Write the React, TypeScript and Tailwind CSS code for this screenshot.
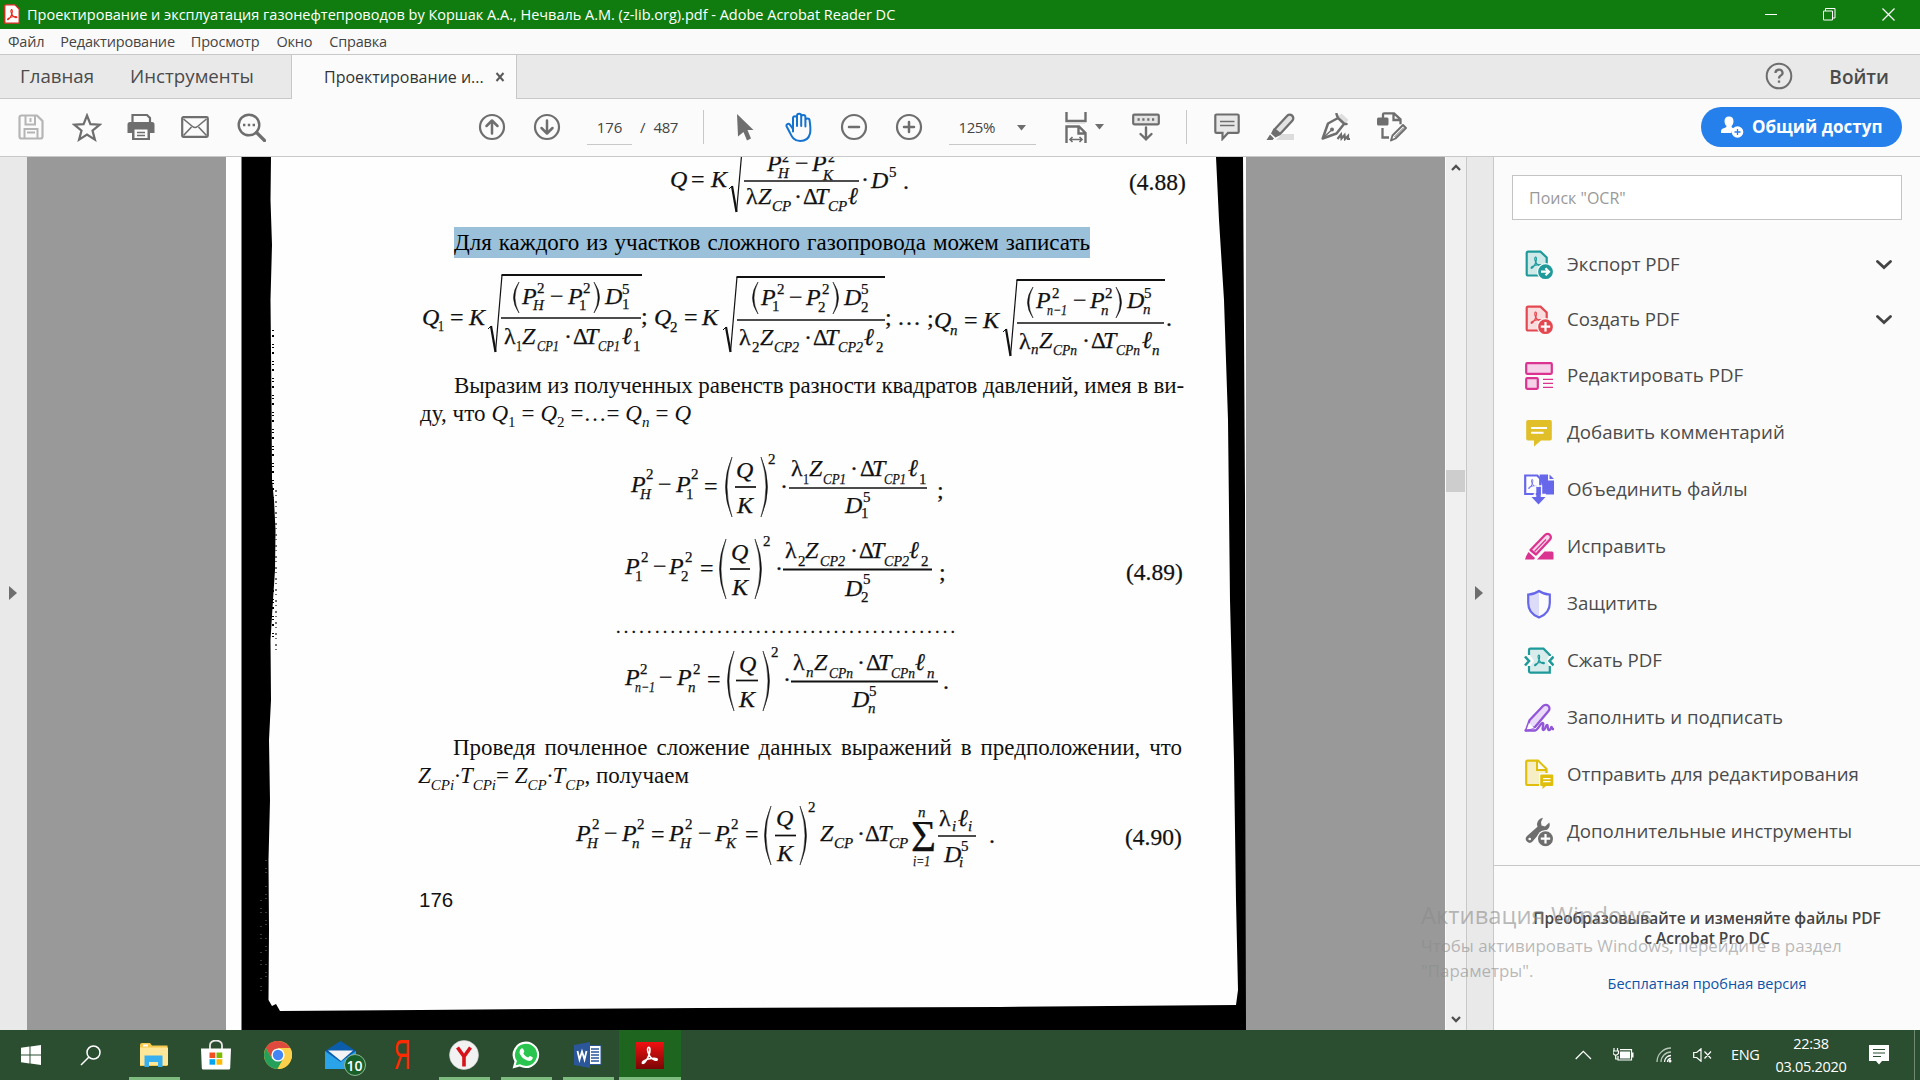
import type { ReactNode } from "react";

const ui = "font-['Open_Sans','Noto_Sans',sans-serif]";
const serif = "font-['Liberation_Serif',serif]";

/* ---------- formula drawing ---------- */

type Glyph = [x: number, y: number, text: string, size?: number, width?: number];

const upright = /^[\d().,;:=−·…λΔΣ]+$/;

function Glyphs({ items }: { items: Glyph[] }) {
  return (
    <>
      {items.map(([x, y, text, size = 24, width], i) => (
        <text
          key={i}
          x={x}
          y={y}
          fontSize={size}
          fontStyle={upright.test(text) ? "normal" : "italic"}
          textLength={width}
          lengthAdjust="spacingAndGlyphs"
        >
          {text}
        </text>
      ))}
    </>
  );
}

function Root({ x, y, top, right, bottom }: { x: number; y: number; top: number; right: number; bottom: number }) {
  return (
    <g fill="none" stroke="#111">
      <path d={`M${x} ${y + 2}l3 -3`} strokeWidth="1" />
      <path d={`M${x + 3} ${y - 1}L${x + 7.5} ${bottom}`} strokeWidth="2.2" />
      <path d={`M${x + 7.5} ${bottom}L${x + 14} ${top}`} strokeWidth="1.2" />
      <path d={`M${x + 13.5} ${top}H${right}`} strokeWidth="1.8" />
    </g>
  );
}

function Rule({ x1, x2, y, w = 1.7 }: { x1: number; x2: number; y: number; w?: number }) {
  return <path d={`M${x1} ${y}H${x2}`} stroke="#111" strokeWidth={w} />;
}

function Parens({ l, r, top, bottom, d = 6 }: { l: number; r: number; top: number; bottom: number; d?: number }) {
  const m = (top + bottom) / 2;
  return (
    <g fill="#111" stroke="#111" strokeWidth="0.5">
      <path d={`M${l + d} ${top}Q${l - d + 1} ${m} ${l + d} ${bottom}Q${l - d + 4} ${m} ${l + d} ${top}`} />
      <path d={`M${r - d} ${top}Q${r + d - 1} ${m} ${r - d} ${bottom}Q${r + d - 4} ${m} ${r - d} ${top}`} />
    </g>
  );
}

function Figure({ top, bottom, children }: { top: number; bottom: number; children: ReactNode }) {
  return (
    <svg
      width={780}
      height={bottom - top}
      viewBox={`416 ${top} 780 ${bottom - top}`}
      className="block shrink-0"
      fontFamily="'Liberation Serif', serif"
      fill="#111"
      stroke="#111"
      strokeWidth="0.25"
    >
      {children}
    </svg>
  );
}

function ScanEdges() {
  return (
    <svg width="1020" height="873" viewBox="226 157 1020 873" className="absolute inset-0">
      <path
        d="M241.500 157H271L270.500 200L272 245L270.500 300L271.500 400L272 480L274 500L275.500 530L275 570L273 600L270.500 640L271 700L269 740L270 800L268.500 860L269 930L268.500 1000L272 1006L276 1004L280 1011L420 1010L700 1008L1000 1007L1236 1005L1238 990L1236 900L1234 760L1230 600L1228 420L1224 300L1219 220L1216 157H1243L1245 500L1246 1030H241.500Z"
        fill="#000"
      />
      <path d="M273 330V640" stroke="#000" strokeWidth="2" strokeDasharray="1 4 2 7 1 2" />
      <path d="M276 490V650" stroke="#444" strokeWidth="1.5" strokeDasharray="2 3 1 5" />
      <path d="M261 900V1000M266 860V990" stroke="#777" strokeWidth="1" strokeDasharray="1 7 1 3 1 13" />
    </svg>
  );
}

function ScannedPage() {
  return (
    <div className={`relative h-[873px] w-[1020px] overflow-hidden bg-[#fefefe] ${serif} text-[#111]`}>
      <ScanEdges />
      <div className="relative ml-[190px] flex w-[780px] flex-col items-start text-[23px] leading-7 whitespace-nowrap">
        <Figure top={157} bottom={227}>
          <Glyphs
            items={[
              [670, 187, "Q"], [691, 187, "="], [711, 187, "K"],
              [767, 171, "P"], [782, 162, "2", 14], [778, 178, "H", 15], [795, 171, "−"],
              [812, 171, "P"], [828, 162, "2", 14], [823, 180, "K", 15],
              [861, 187, "·"], [871, 188, "D"], [889, 177, "5", 15], [903, 189, "."],
              [746, 204, "λ"], [758, 204, "Z"], [772, 211, "CP", 15], [794, 204, "·"],
              [803, 204, "Δ", 23], [815, 204, "T"], [828, 211, "CP", 15], [848, 204, "ℓ"],
              [1129, 190, "(4.88)", 23.5],
            ]}
          />
          <Root x={729} y={187} top={139} right={860} bottom={212} />
          <Rule x1={744} x2={859} y={181} />
        </Figure>

        <p className="ml-[38px] h-[31px] w-[636px] bg-[#9ac0da] pt-[2px] text-black [text-align-last:justify]">
          Для каждого из участков сложного газопровода можем записать
        </p>

        <Figure top={258} bottom={372}>
          <Glyphs
            items={[
              [422, 325, "Q"], [438, 331, "1", 15, 6], [450, 325, "="], [469, 325, "K"],
              [522, 304, "P"], [537, 293, "2", 15], [533, 310, "H", 15], [550, 304, "−"],
              [568, 304, "P"], [583, 293, "2", 15], [579, 310, "1", 15],
              [605, 304, "D"], [622, 294, "5", 15], [622, 309, "1", 15], [641, 324, ";"],
              [504, 344, "λ"], [516, 351, "1", 15, 6], [522, 344, "Z"], [537, 351, "CP1", 15, 22], [564, 344, "·"],
              [573, 344, "Δ", 23], [585, 344, "T"], [598, 351, "CP1", 15, 22], [622, 344, "ℓ"], [633, 351, "1", 15],

              [654, 325, "Q"], [670, 332, "2", 15], [684, 325, "="], [702, 325, "K"],
              [761, 305, "P"], [777, 294, "2", 15], [772, 311, "1", 15], [789, 305, "−"],
              [806, 305, "P"], [822, 294, "2", 15], [818, 312, "2", 15],
              [844, 305, "D"], [861, 294, "5", 15], [861, 312, "2", 15], [885, 325, ";"],
              [739, 345, "λ"], [752, 352, "2", 15], [760, 345, "Z"], [774, 352, "CP2", 15, 25], [804, 345, "·"],
              [813, 345, "Δ", 23], [825, 345, "T"], [838, 352, "CP2", 15, 25], [864, 345, "ℓ"], [876, 352, "2", 15],

              [897, 325, "…", 24], [927, 326, ";"], [934, 328, "Q"], [950, 335, "n", 15], [964, 328, "="], [983, 328, "K"],
              [1036, 308, "P"], [1052, 298, "2", 15], [1047, 315, "n−1", 15, 20], [1073, 308, "−"],
              [1090, 308, "P"], [1105, 298, "2", 15], [1101, 315, "n", 15],
              [1127, 308, "D"], [1144, 298, "5", 15], [1143, 314, "n", 15], [1166, 326, "."],
              [1019, 349, "λ"], [1031, 354, "n", 15], [1039, 348, "Z"], [1053, 355, "CPn", 15, 24], [1082, 348, "·"],
              [1091, 348, "Δ", 23], [1103, 348, "T"], [1116, 355, "CPn", 15, 24], [1142, 348, "ℓ"], [1152, 355, "n", 15],
            ]}
          />
          <Root x={488} y={327} top={275} right={642} bottom={352} />
          <Rule x1={501} x2={641} y={318} />
          <Parens l={513} r={600} top={282} bottom={313} />
          <Root x={723} y={328} top={277} right={885} bottom={352} />
          <Rule x1={737} x2={885} y={320} />
          <Parens l={752} r={839} top={282} bottom={314} />
          <Root x={1003} y={330} top={280} right={1165} bottom={356} />
          <Rule x1={1017} x2={1164} y={323} />
          <Parens l={1027} r={1122} top={287} bottom={318} />
        </Figure>

        <p className="ml-[38px] h-7 w-[730px] tracking-[-0.12px] [text-align-last:justify]">
          Выразим из полученных равенств разности квадратов давлений, имея в ви-
        </p>
        <p className="ml-1 h-7 w-[271px] [text-align-last:justify] [&_sub]:-bottom-[6px] [&_sub]:text-[15px] [&_sub]:leading-none">
          ду, что <i>Q</i>
          <sub>1</sub> = <i>Q</i>
          <sub>2</sub> =…= <i>Q</i>
          <sub>
            <i>n</i>
          </sub>{" "}
          = <i>Q</i>
        </p>

        <Figure top={428} bottom={734}>
          <Glyphs
            items={[
              [631, 492, "P"], [646, 479, "2", 15], [640, 499, "H", 15], [658, 492, "−"],
              [676, 492, "P"], [691, 479, "2", 15], [686, 499, "1", 15], [704, 494, "="],
              [736, 478, "Q"], [737, 513, "K"], [768, 464, "2", 15], [780, 494, "·"],
              [791, 476, "λ"], [803, 484, "1", 15, 6], [809, 476, "Z"], [823, 484, "CP1", 15, 23], [850, 476, "·"],
              [860, 476, "Δ", 23], [872, 476, "T"], [884, 484, "CP1", 15, 22], [908, 476, "ℓ"], [919, 484, "1", 15],
              [845, 513, "D"], [863, 502, "5", 15], [861, 518, "1", 15], [937, 498, ";"],

              [625, 574, "P"], [641, 562, "2", 15], [635, 581, "1", 15], [653, 574, "−"],
              [669, 574, "P"], [685, 562, "2", 15], [681, 581, "2", 15], [700, 576, "="],
              [731, 560, "Q"], [732, 595, "K"], [763, 546, "2", 15], [775, 576, "·"],
              [785, 558, "λ"], [798, 566, "2", 15], [805, 558, "Z"], [820, 566, "CP2", 15, 25], [850, 558, "·"],
              [859, 558, "Δ", 23], [871, 558, "T"], [884, 566, "CP2", 15, 25], [909, 558, "ℓ"], [921, 566, "2", 15],
              [845, 596, "D"], [863, 584, "5", 15], [861, 602, "2", 15], [939, 580, ";"],
              [1126, 580, "(4.89)", 23.5],

              [625, 685, "P"], [640, 674, "2", 15], [635, 692, "n−1", 15, 20], [659, 685, "−"],
              [677, 685, "P"], [693, 674, "2", 15], [688, 692, "n", 15], [707, 687, "="],
              [739, 672, "Q"], [739, 707, "K"], [771, 657, "2", 15], [783, 687, "·"],
              [793, 670, "λ"], [806, 677, "n", 15], [814, 670, "Z"], [829, 678, "CPn", 15, 24], [857, 670, "·"],
              [866, 670, "Δ", 23], [878, 670, "T"], [891, 678, "CPn", 15, 24], [915, 670, "ℓ"], [927, 678, "n", 15],
              [852, 707, "D"], [869, 696, "5", 15], [868, 713, "n", 15], [943, 689, "."],
            ]}
          />
          <text x="616" y="633" fontSize="18" textLength="339" lengthAdjust="spacing">
            {".".repeat(44)}
          </text>
          <Rule x1={735} x2={756} y={487} />
          <Rule x1={789} x2={927} y={488} />
          <Parens l={725} r={768} top={457} bottom={517} d={7} />
          <Rule x1={730} x2={750} y={569} />
          <Rule x1={783} x2={932} y={569.5} w={2.2} />
          <Parens l={719} r={762} top={539} bottom={599} d={7} />
          <Rule x1={736} x2={758} y={680.5} />
          <Rule x1={791} x2={938} y={681.5} w={2.2} />
          <Parens l={727} r={770} top={651} bottom={711} d={7} />
        </Figure>

        <p className="ml-[37px] h-7 w-[729px] [text-align-last:justify]">
          Проведя почленное сложение данных выражений в предположении, что
        </p>
        <p className="ml-[2px] h-7 w-[269px] [text-align-last:justify] [&_sub]:-bottom-[7px] [&_sub]:text-[15px] [&_sub]:leading-none">
          <i>
            Z<sub>CPi</sub>·T<sub>CPi</sub>
          </i>
          ={" "}
          <i>
            Z<sub>CP</sub>·T<sub>CP</sub>
          </i>
          , получаем
        </p>

        <Figure top={790} bottom={886}>
          <Glyphs
            items={[
              [576, 841, "P"], [592, 829, "2", 15], [587, 848, "H", 15], [604, 841, "−"],
              [622, 841, "P"], [637, 829, "2", 15], [632, 848, "n", 15], [651, 842, "="],
              [669, 841, "P"], [685, 829, "2", 15], [680, 848, "H", 15], [698, 841, "−"],
              [715, 841, "P"], [731, 829, "2", 15], [726, 848, "K", 15], [745, 842, "="],
              [776, 826, "Q"], [777, 861, "K"], [808, 812, "2", 15],
              [820, 841, "Z"], [834, 848, "CP", 15], [857, 841, "·"],
              [865, 841, "Δ", 23], [878, 841, "T"], [889, 848, "CP", 15],
              [911, 851, "Σ", 44, 25], [918, 817, "n", 15], [913, 866, "i=1", 15, 17],
              [939, 826, "λ"], [952, 831, "i", 15], [958, 826, "ℓ"], [968, 831, "i", 15],
              [944, 862, "D"], [961, 851, "5", 15], [959, 867, "i", 15], [989, 843, "."],
              [1125, 845, "(4.90)", 23.5],
            ]}
          />
          <Rule x1={775} x2={796} y={835.5} />
          <Rule x1={938} x2={976} y={836} />
          <Parens l={764} r={807} top={806} bottom={865} d={7} />
        </Figure>

        <p className="ml-[3px] font-['Liberation_Sans',sans-serif] text-[20.5px]">176</p>
      </div>
    </div>
  );
}

/* ---------- icons ---------- */

function Svg({ w, h, box, className = "", children }: { w: number; h: number; box?: string; className?: string; children: ReactNode }) {
  return (
    <svg width={w} height={h} viewBox={box ?? `0 0 ${w} ${h}`} className={`block shrink-0 ${className}`} fill="none">
      {children}
    </svg>
  );
}

const g = "#6e6e6e";

function SaveIcon() {
  return (
    <Svg w={26} h={26}>
      <path d="M1.500 3.500a2 2 0 0 1 2-2H19l5.500 5.500v15.500a2 2 0 0 1-2 2h-19a2 2 0 0 1-2-2z" stroke="#b5b5b5" strokeWidth="2.2" />
      <path d="M7.500 2v8.500h9.500V2M12.500 4v4M6.500 24.500V15h13v9.500M9 18.500h8" stroke="#b5b5b5" strokeWidth="2" />
    </Svg>
  );
}

function StarIcon() {
  return (
    <Svg w={30} h={29}>
      <path d="M15 2.500l3.400 8.700 9.300.5-7.200 5.900 2.400 9L15 21.500l-7.900 5.100 2.400-9-7.200-5.900 9.300-.5z" stroke={g} strokeWidth="2.2" />
    </Svg>
  );
}

function PrintIcon() {
  return (
    <Svg w={28} h={28} className="-ml-[3px]">
      <path d="M5.500 9V2h14.500l3 3v4" stroke={g} strokeWidth="2.2" />
      <path d="M3 9h22a2.500 2.500 0 0 1 2.500 2.500V20H23v7H5v-7H.5v-8.500A2.500 2.500 0 0 1 3 9z" fill={g} />
      <path d="M7.500 16.500h13V25h-13z" fill="#fafafa" />
      <path d="M10 19.500h8M10 22.500h8" stroke={g} strokeWidth="1.3" />
    </Svg>
  );
}

function EnvelopeIcon() {
  return (
    <Svg w={28} h={22} className="-ml-px">
      <rect x="1.2" y="1.2" width="25.6" height="19.6" rx="1.2" stroke={g} strokeWidth="2.2" />
      <path d="M2.500 3l9 7.500q2.500 2 5 0L25.500 3M2.500 19.500l8-8.500M25.500 19.500l-8-8.500" stroke={g} strokeWidth="1.6" />
    </Svg>
  );
}

function FindIcon() {
  return (
    <Svg w={29} h={29}>
      <circle cx="12" cy="12" r="10.3" stroke={g} strokeWidth="2.4" />
      <path d="M19.500 19.500l8 8" stroke={g} strokeWidth="3.2" strokeLinecap="round" />
      <path d="M6 12h2.400M10.800 12h2.400M15.600 12H18" stroke={g} strokeWidth="2.4" />
    </Svg>
  );
}

function CircleIcon({ d }: { d: string }) {
  return (
    <Svg w={28} h={28}>
      <circle cx="14" cy="14" r="12" stroke={g} strokeWidth="2.2" />
      <path d={d} stroke={g} strokeWidth="2.5" strokeLinecap="round" strokeLinejoin="round" />
    </Svg>
  );
}

function HandIcon() {
  return (
    <Svg w={29} h={31}>
      <path
        d="M8 19.500V6.200a2 2 0 0 1 4 0V14M12 14V3.800a2 2 0 0 1 4.200 0V14M16.200 14V5a2 2 0 0 1 4.200 0v9.500M20.400 14.500V8.500a2 2 0 0 1 4.200 0c.6 5 4 20.500-9.400 20.500-6.500 0-8.400-4.500-10.400-8.500L1.700 14.500c-1-2.300 1.800-3.600 3.200-1.900L8 17"
        stroke="#1473d0"
        strokeWidth="2"
        strokeLinecap="round"
        strokeLinejoin="round"
      />
    </Svg>
  );
}

function FitIcon() {
  return (
    <Svg w={22} h={31}>
      <path d="M1.500 0v9h19V0" stroke={g} strokeWidth="2.4" />
      <path d="M2 11h18" stroke="#ddd" strokeWidth="1.5" />
      <path d="M1.500 31V14.500H14l6.500 6.500V31M13.500 15v6.500H20" stroke={g} strokeWidth="2.4" />
      <path d="M5 27.500h12M7.500 25L5 27.500 7.500 30M14.500 25l2.500 2.500-2.500 2.500" stroke={g} strokeWidth="1.6" />
    </Svg>
  );
}

function ReadModeIcon() {
  return (
    <Svg w={28} h={28}>
      <rect x="1.2" y="1.7" width="25.6" height="9.6" rx="1" fill="#e4e4e4" stroke={g} strokeWidth="2.2" />
      <path d="M5.500 6.500h2.200M10.300 6.500h2.200M15.200 6.500h2.200M20 6.500h2.200" stroke={g} strokeWidth="2.6" />
      <path d="M14 14.500v11.500M8.500 21l5.500 5.300 5.500-5.300" stroke={g} strokeWidth="2.4" strokeLinecap="round" />
    </Svg>
  );
}

function CommentIcon() {
  return (
    <Svg w={26} h={28}>
      <path d="M2.500 1.500h21a1.200 1.200 0 0 1 1.200 1.200v16a1.200 1.200 0 0 1-1.200 1.200H14l-5.500 6v-6h-6a1.200 1.200 0 0 1-1.200-1.200v-16a1.200 1.200 0 0 1 1.200-1.200z" fill="#e8e8e8" stroke={g} strokeWidth="2.2" />
      <path d="M6 8.500h14.500M6 12.500h14.500" stroke={g} strokeWidth="1.3" />
    </Svg>
  );
}

function MarkerIcon() {
  return (
    <Svg w={29} h={28}>
      <path d="M10 27l6-6h12v6z" fill="#dcdcdc" />
      <path d="M8.500 16.500L21 3a3.200 3.200 0 0 1 5.500 4.500L14 21z" fill="#e2e2e2" stroke={g} strokeWidth="2.3" strokeLinejoin="round" />
      <path d="M7.500 15.500l7 6.500-5 2.500-4.500-4zM4 21.500l4 4-1.500 1.500H.5z" fill={g} />
    </Svg>
  );
}

function SignIcon() {
  return (
    <Svg w={29} h={28}>
      <path d="M16.500 4l4-3.500 7 6.500-3.500 4z" fill="#dedede" />
      <path d="M15.500 1l1.500 4 6.500 6h2M17 5L7 10.500 1.700 25.500l13.800-5L23 11" stroke={g} strokeWidth="2.5" strokeLinejoin="round" strokeLinecap="round" />
      <path d="M2 25l8-7.500" stroke={g} strokeWidth="1.5" />
      <circle cx="11" cy="16.500" r="2" fill={g} />
      <path d="M16.500 26l3.500-4.500.5 4 3-3.500.5 4 3-3v3h2" stroke={g} strokeWidth="2.2" />
    </Svg>
  );
}

function MoreToolsIcon() {
  return (
    <Svg w={31} h={30}>
      <path d="M6 7V2.500A1.200 1.200 0 0 1 7.200 1.300H17l6.500 6v5M16.500 2v6H23M5.500 16v9.500H12" stroke={g} strokeWidth="2.3" />
      <rect x="0" y="5.5" width="11.5" height="8" rx="1.5" fill={g} />
      <path d="M14 28.500l1.500-5L26 13l3 3-10.500 10.500z" fill="#fafafa" stroke={g} strokeWidth="1.9" strokeLinejoin="round" />
      <path d="M17.500 25L27 15.500" stroke={g} strokeWidth="1" />
    </Svg>
  );
}

/* small Acrobat trefoil used inside the document icons */
function Trefoil({ x, y, s = 1, color }: { x: number; y: number; s?: number; color: string }) {
  return (
    <path
      transform={`translate(${x} ${y}) scale(${s})`}
      d="M4.600.6c1.300-.6 1.200 2.400.6 4.400C4.300 7.600 2.600 10.400 1.300 11.200c-.9.300-1-.6 0-1.400 1.800-1.200 5.200-2 7.300-2 2.400 0 2.400 1.600.6 1.300-1.800-.4-3.600-2.200-4.400-4.100C4 3 4 1 4.600.6z"
      stroke={color}
      strokeWidth="1.1"
    />
  );
}

function PdfBadgeIcon({ color, tint, mark }: { color: string; tint: string; mark: string }) {
  return (
    <Svg w={30} h={30}>
      <path d="M4 1.700h12.500L22.700 7.500V25.500H4a1.300 1.300 0 0 1-1.300-1.300V3A1.300 1.300 0 0 1 4 1.700z" fill={tint} stroke={color} strokeWidth="2.2" />
      <Trefoil x={6.5} y={6.5} s={1.05} color={color} />
      <circle cx="21.5" cy="21.7" r="8.6" fill="#fbfbfb" />
      <circle cx="21.5" cy="21.7" r="7.4" fill={color} />
      <path d={mark} stroke="#fff" strokeWidth="2.2" />
    </Svg>
  );
}

function EditPdfIcon() {
  return (
    <Svg w={30} h={30}>
      <rect x="2.2" y="2.2" width="25.6" height="10.6" rx="1" fill="#f5d2e8" stroke="#da3490" strokeWidth="2.2" />
      <rect x="2.2" y="17.2" width="11.6" height="10.6" rx="1" fill="#f5d2e8" stroke="#da3490" strokeWidth="2.2" />
      <path d="M19 18.300h10M19 22.300h10M19 26.300h10" stroke="#da3490" strokeWidth="1.3" />
    </Svg>
  );
}

function AddCommentIcon() {
  return (
    <Svg w={30} h={30}>
      <path d="M4 2h22a1.800 1.800 0 0 1 1.800 1.800v17a1.800 1.800 0 0 1-1.800 1.800h-9L10 28.500v-6H4a1.800 1.800 0 0 1-1.800-1.800v-17A1.800 1.800 0 0 1 4 2z" fill="#e0bf28" />
      <path d="M7 10h16M7 14.700h12.500" stroke="#fff" strokeWidth="2" />
    </Svg>
  );
}

function CombineIcon() {
  return (
    <Svg w={30} h={31}>
      <path d="M1.200 1.500h12l3 3V20H1.200z" fill="#fff" stroke="#6767ec" strokeWidth="2.2" />
      <path d="M15.500.5H24v6h6V20.500H18v-8z" fill="#6767ec" />
      <path d="M25.500.5l4.500 4.500h-4.500z" fill="#6767ec" />
      <Trefoil x={4} y={5} s={0.85} color="#6767ec" />
      <path d="M9.500 20.500h1.500V12h6.500v8.500H22" stroke="#fbfbfb" strokeWidth="1.5" />
      <path d="M12.300 13h4.400v10h4.800l-7 7.500-7-7.500h4.800z" fill="#6767ec" />
    </Svg>
  );
}

function RedactIcon() {
  return (
    <Svg w={30} h={30}>
      <path d="M6.500 18L21 3a3.300 3.300 0 0 1 5 4.500L12 22.500z" fill="#f8d6e9" stroke="#da3490" strokeWidth="2.3" strokeLinejoin="round" />
      <path d="M10.500 19.500L22 7.500" stroke="#da3490" strokeWidth="1.2" />
      <path d="M4.500 20l6.500 6-1 1.500H1a26 26 0 0 1 3.500-7.500zM20.500 19.500H28a1.500 1.500 0 0 1 1.500 1.500v6.500H13z" fill="#da3490" />
    </Svg>
  );
}

function ShieldIcon() {
  return (
    <Svg w={30} h={30}>
      <path d="M15 2.500V27.500C8 25 4.200 21 4.200 13.500V5.500C8 5.500 12 5 15 2.500z" fill="#dcdcf8" />
      <path d="M15 2q5 3.500 10.800 3.500v8.500C25.800 21 21.500 26 15 28.500 8.500 26 4.200 21 4.200 14V5.500Q10 5.500 15 2z" stroke="#6767ec" strokeWidth="2.2" />
    </Svg>
  );
}

function CompressIcon() {
  return (
    <Svg w={30} h={30}>
      <path d="M6 3h13.500l6 6-3 6 3 5v6H6v-6l4-5-4-6z" fill="#d8ecec" />
      <path d="M5 9V4a1.300 1.300 0 0 1 1.300-1.300H19.500L25.800 9v1M5 20v5.300a1.300 1.300 0 0 0 1.300 1.300h19.500V20" stroke="#1f9a9a" strokeWidth="2.2" />
      <path d="M1 10.500L5 15l-4 4.500M29.500 10.500L25.500 15l4 4.500" stroke="#1f9a9a" strokeWidth="2.6" />
      <Trefoil x={10} y={8.5} s={1} color="#1f9a9a" />
    </Svg>
  );
}

function FillSignIcon() {
  return (
    <Svg w={30} h={30}>
      <path d="M2 27.300l3.500-10L19 3a3.600 3.600 0 0 1 5.500 5L11 24z" fill="#eadcf8" stroke="#9256d9" strokeWidth="2.3" strokeLinejoin="round" />
      <path d="M2.500 27l2.500-7 5 5z" fill="#fff" />
      <path d="M1.500 27.500h9c4 0 5.500-8 8.500-7.500 1.500.5-2 7 .5 7 2 0 2-5 3.500-5s0 5 2 5 1.500-3 2.500-3 0 3 2 2" stroke="#9256d9" strokeWidth="2.3" strokeLinecap="round" />
    </Svg>
  );
}

function SendReviewIcon() {
  return (
    <Svg w={30} h={31}>
      <path d="M3.500 1.700H14L22.500 10v16H3.500a1.300 1.300 0 0 1-1.300-1.300V3a1.300 1.300 0 0 1 1.300-1.300z" fill="#f6eec4" stroke="#e0bf0c" strokeWidth="2.2" />
      <path d="M13 2v9h9" fill="#fbfbfb" stroke="#e0bf0c" strokeWidth="2" />
      <path d="M15 14h15v17H15z" fill="#fbfbfb" />
      <path d="M17.500 15.500H28a1.300 1.300 0 0 1 1.300 1.300v9a1.300 1.300 0 0 1-1.300 1.300h-6L18.500 30v-2.900h-1a1.300 1.300 0 0 1-1.300-1.300v-9a1.300 1.300 0 0 1 1.300-1.300z" fill="#e0bf0c" />
      <path d="M19 19.700h7.500M19 22.700h7.500" stroke="#fff" strokeWidth="1.3" />
    </Svg>
  );
}

function WrenchPlusIcon() {
  return (
    <Svg w={30} h={30}>
      <path d="M19 .8a6.500 6.500 0 0 0-5.500 9L3 19a3.800 3.800 0 1 0 5.500 5.500L17.500 14a6.500 6.500 0 0 0 7.800-8.500L21 9.500l-3.500-1-.5-3.500z" fill={g} />
      <circle cx="5.7" cy="22" r="1.3" fill="#fff" />
      <circle cx="21.5" cy="21.7" r="8.6" fill="#fbfbfb" />
      <circle cx="21.5" cy="21.7" r="7.5" fill={g} />
      <path d="M21.500 17v9.400M16.800 21.700h9.400" stroke="#fff" strokeWidth="2.2" />
    </Svg>
  );
}

/* ---------- window chrome ---------- */

function TitleBar() {
  return (
    <header className="flex h-[29px] shrink-0 items-center bg-[#107c10] pl-1 text-white">
      <Svg w={16} h={20} className="-mt-px">
        <path d="M1.500.8h9.500L15.200 5v14.200H.8V1.500z" fill="#fff" stroke="#d8261c" strokeWidth="1.3" />
        <Trefoil x={3} y={5} s={0.95} color="#e8261c" />
      </Svg>
      <span className="ml-[7px] text-[14.5px] tracking-[-0.005px]">
        Проектирование и эксплуатация газонефтепроводов by Коршак А.А., Нечваль А.М. (z-lib.org).pdf - Adobe Acrobat Reader DC
      </span>
      <div className="mr-[25px] ml-auto flex items-center gap-[46px] pb-px">
        <div className="h-px w-3 bg-white" />
        <Svg w={13} h={13}>
          <path d="M.5 3h9v9h-9zM2.500 3V.5H12v9.500H9.500" stroke="#fff" />
        </Svg>
        <Svg w={13} h={13}>
          <path d="M.5.5l12 12M12.500.5l-12 12" stroke="#fff" strokeWidth="1.2" />
        </Svg>
      </div>
    </header>
  );
}

function MenuBar() {
  return (
    <nav className="flex h-[26px] shrink-0 items-center gap-[17px] border-b border-[#c8c8c8] bg-[#fafafa] pl-2 text-[14.5px] tracking-[-0.2px] text-[#444]">
      <span>Файл</span>
      <span className="-ml-px">Редактирование</span>
      <span className="-ml-px">Просмотр</span>
      <span>Окно</span>
      <span>Справка</span>
    </nav>
  );
}

function TabBar() {
  return (
    <div className="flex h-11 shrink-0 bg-[#e9e9e9] text-[18.7px] text-[#4b4b4b]">
      <div className="flex w-[291px] items-center border-b border-[#c8c8c8] pl-5">
        <span>Главная</span>
        <span className="ml-[36px]">Инструменты</span>
      </div>
      <div className="flex w-[226px] items-center border-x border-[#c8c8c8] bg-[#fbfbfb] pl-8 text-[16px] text-[#333]">
        <span>Проектирование и...</span>
        <Svg w={10} h={10} className="ml-[11px]">
          <path d="M1.500 1l7 8M8.500 1l-7 8" stroke="#5a5a5a" strokeWidth="2" />
        </Svg>
      </div>
      <div className="flex flex-1 items-center justify-end border-b border-[#c8c8c8] pr-[31px]">
        <Svg w={28} h={28} className="-mt-[2px]">
          <circle cx="14" cy="14" r="12.3" stroke={g} strokeWidth="2" />
          <path d="M10.500 11a3.500 3.200 0 1 1 5 2.800c-1.200.6-1.500 1.200-1.500 2.700M14 18.500v2.300" stroke={g} strokeWidth="2.3" />
        </Svg>
        <span className="ml-[36px] pt-[2px] text-[19px] font-semibold">Войти</span>
      </div>
    </div>
  );
}

function Caret() {
  return (
    <Svg w={9} h={6}>
      <path d="M0 0h9L4.500 5.500z" fill={g} />
    </Svg>
  );
}

function Toolbar() {
  return (
    <div className="flex h-[58px] shrink-0 items-center border-b border-[#c8c8c8] bg-[#fbfbfb] pb-px pl-[18px] text-[15px] text-[#444]">
      <div className="flex w-[248px] items-center justify-between">
        <SaveIcon />
        <StarIcon />
        <PrintIcon />
        <EnvelopeIcon />
        <FindIcon />
      </div>
      <div className="ml-[212px] flex items-center gap-[27px]">
        <CircleIcon d="M14 20.500V8M8.500 13L14 7.500l5.500 5.500" />
        <CircleIcon d="M14 7.500V20M8.500 15l5.500 5.500 5.500-5.500" />
      </div>
      <div className="mt-[2px] ml-[26px] h-[33px] w-[45px] border-b border-[#c8c8c8] pt-1 text-center">176</div>
      <span className="ml-2">/</span>
      <span className="ml-2 w-6 tracking-[-0.4px]">487</span>
      <div className="ml-[25px] h-[34px] w-px bg-[#c8c8c8]" />
      <Svg w={18} h={27} className="ml-[33px]">
        <path d="M0 0l16.500 16h-6l3.500 8.500-4 2L6.500 18 1 22.500z" fill={g} />
      </Svg>
      <div className="ml-[30px] flex items-center">
        <HandIcon />
        <div className="ml-[26px] flex gap-[27px]">
          <CircleIcon d="M9 14h10" />
          <CircleIcon d="M9 14h10M14 9v10" />
        </div>
      </div>
      <div className="mt-[2px] ml-[26px] flex h-[33px] w-[87px] items-center justify-between border-b border-[#c8c8c8] pr-[10px] pl-[10px]">
        <span className="tracking-[-0.4px]">125%</span>
        <Caret />
      </div>
      <div className="ml-[29px] flex items-center gap-2">
        <FitIcon />
        <Caret />
      </div>
      <div className="ml-7">
        <ReadModeIcon />
      </div>
      <div className="ml-[26px] h-[34px] w-px bg-[#c8c8c8]" />
      <div className="ml-[27px] flex w-[194px] items-center justify-between">
        <CommentIcon />
        <MarkerIcon />
        <SignIcon />
        <MoreToolsIcon />
      </div>
      <button className="mr-[18px] ml-auto flex h-10 w-[201px] items-center rounded-full bg-[#2680eb] pl-5 text-[17px] font-bold text-white">
        <Svg w={23} h={22}>
          <path d="M8 0.500c3 0 4.500 2 4.500 4.700 0 2.300-1 4-2 4.800 0 1.500 1 2 3 3-2 1-3 2-3 4H0c0-4 .5-4 4-5.300 1.500-.6 1.500-1 1.500-1.700-1-.8-2-2.500-2-4.800C3.500 2.500 5 .5 8 .5z" fill="#fff" />
          <circle cx="16.5" cy="16" r="5.8" fill="#fff" />
          <path d="M16.500 13v6M13.500 16h6" stroke="#2680eb" strokeWidth="1.3" />
        </Svg>
        <span className="ml-2">Общий доступ</span>
      </button>
    </div>
  );
}

const tools = [
  { label: "Экспорт PDF", icon: <PdfBadgeIcon color="#1f9a9a" tint="#cfe8e8" mark="M17 21.700h7M21.500 18.200l3.500 3.500-3.500 3.500" />, open: true },
  { label: "Создать PDF", icon: <PdfBadgeIcon color="#e34850" tint="#f9dcdd" mark="M21.500 17v9.400M16.800 21.700h9.400" />, open: true },
  { label: "Редактировать PDF", icon: <EditPdfIcon /> },
  { label: "Добавить комментарий", icon: <AddCommentIcon /> },
  { label: "Объединить файлы", icon: <CombineIcon /> },
  { label: "Исправить", icon: <RedactIcon /> },
  { label: "Защитить", icon: <ShieldIcon /> },
  { label: "Сжать PDF", icon: <CompressIcon /> },
  { label: "Заполнить и подписать", icon: <FillSignIcon /> },
  { label: "Отправить для редактирования", icon: <SendReviewIcon /> },
  { label: "Дополнительные инструменты", icon: <WrenchPlusIcon /> },
];

function ToolsPanel() {
  return (
    <aside className="flex w-[426px] flex-col bg-[#fbfbfb] text-[#4b4b4b]">
      <div className="mx-[18px] mt-[18px] flex h-[45px] items-center border border-[#c4c4c4] bg-white pl-4 text-[16px] text-[#999]">
        Поиск "OCR"
      </div>
      <ul className="mt-[17px] flex h-[629px] flex-col border-b border-[#c8c8c8]">
        {tools.map((t) => (
          <li
            key={t.label}
            className={`flex shrink-0 items-center pr-7 pl-[30px] text-[18.7px] ${t.open ? "h-[55px]" : "h-[57px]"}`}
          >
            {t.icon}
            <span className="ml-[13px]">{t.label}</span>
            {t.open && (
              <Svg w={16} h={10} className="ml-auto">
                <path d="M1.500 1.500L8 7.500l6.500-6" stroke="#444" strokeWidth="2.8" strokeLinecap="round" />
              </Svg>
            )}
          </li>
        ))}
      </ul>
      <div className="mt-[42px] flex flex-col items-center text-center">
        <p className="text-[15.5px] leading-5 font-semibold text-[#444]">
          Преобразовывайте и изменяйте файлы PDF
          <br />с Acrobat Pro DC
        </p>
        <a className="mt-[26px] text-[14.5px] leading-5 text-[#0d54a8]">Бесплатная пробная версия</a>
      </div>
    </aside>
  );
}

function DocumentArea() {
  return (
    <div className="flex h-[873px] shrink-0">
      <div className="flex w-[27px] items-center bg-[#e9e9e9] pb-[2px] pl-[9px]">
        <Svg w={8} h={14}>
          <path d="M0 0l8 7-8 7z" fill={g} />
        </Svg>
      </div>
      <div className="flex w-[1418px] bg-[#999] pl-[199px]">
        <ScannedPage />
      </div>
      <div className="flex w-[22px] flex-col items-center border-r border-l border-r-[#c8c8c8] border-l-[#fafafa] bg-[#f0f0f0]">
        <Svg w={10} h={7} className="mt-[7px]">
          <path d="M1 6l4-4 4 4" stroke="#505050" strokeWidth="2.3" />
        </Svg>
        <div className="mt-[299px] h-[22px] w-[19px] self-start bg-[#cdcdcd]" />
        <Svg w={10} h={7} className="mt-auto mb-[7px]">
          <path d="M1 1l4 4 4-4" stroke="#505050" strokeWidth="2.3" />
        </Svg>
      </div>
      <div className="flex w-[27px] items-center border-r border-[#c8c8c8] bg-[#e9e9e9] pb-[2px] pl-2">
        <Svg w={8} h={14}>
          <path d="M0 0l8 7-8 7z" fill={g} />
        </Svg>
      </div>
      <ToolsPanel />
    </div>
  );
}

/* ---------- taskbar ---------- */

function AppSlot({ children, running = false, active = false }: { children: ReactNode; running?: boolean; active?: boolean }) {
  return (
    <div className={`flex h-[50px] w-[62px] flex-col items-center justify-between ${active ? "bg-[#1e661f]" : ""}`}>
      <div className="flex h-[47px] items-center pt-[3px]">{children}</div>
      {running && <div className={`h-[3px] bg-[#7dbb7f] ${active ? "w-[62px]" : "w-[51px]"}`} />}
    </div>
  );
}

function Taskbar() {
  return (
    <footer className="flex h-[50px] shrink-0 items-center bg-[#2b4e31] text-white">
      <div className="flex w-[61px] justify-center">
        <Svg w={20} h={20}>
          <path d="M0 2.800l8.500-1.200v7.900H0zM9.500 1.400L20 0v9.500H9.500zM0 10.500h8.500v7.900L0 17.200zM9.500 10.500H20V20L9.500 18.600z" fill="#fff" />
        </Svg>
      </div>
      <div className="flex w-[62px] justify-center">
        <Svg w={21} h={21} className="-ml-1">
          <circle cx="13.5" cy="7.5" r="6.5" stroke="#fff" strokeWidth="1.5" />
          <path d="M8.700 12.300L1 20" stroke="#fff" strokeWidth="1.5" />
        </Svg>
      </div>
      <AppSlot running>
        <Svg w={28} h={24}>
          <path d="M0 2q0-2 2-2h8l2 2.500h15.500V23H0z" fill="#f6c84c" />
          <path d="M0 4.500h28V22H0z" fill="#ffe79a" />
          <path d="M3 1.500h5v2H3z" fill="#fff" />
          <path d="M4.500 24V12.500h18V24h-4.500v-5h-9v5z" fill="#38b0ef" />
        </Svg>
      </AppSlot>
      <AppSlot>
        <Svg w={30} h={30}>
          <path d="M9 10V5a6 4.500 0 0 1 12 0v5" stroke="#e8e8e8" strokeWidth="1.8" />
          <path d="M0 8.500h30l-.8 19.500a1.500 1.500 0 0 1-1.500 1.500H2.300A1.500 1.500 0 0 1 .8 28z" fill="#fff" />
          <path d="M8.500 12.500h5.800v5.500H8.500z" fill="#f25022" />
          <path d="M15.500 12.500h5.800v5.500h-5.800z" fill="#7fba00" />
          <path d="M8.500 19.200h5.800v5.500H8.500z" fill="#00a4ef" />
          <path d="M15.500 19.200h5.800v5.500h-5.800z" fill="#ffb900" />
        </Svg>
      </AppSlot>
      <AppSlot>
        <Svg w={28} h={28}>
          <circle cx="14" cy="14" r="14" fill="#fcc934" />
          <path d="M14 14L1.900 7A14 14 0 0 1 26.100 7H14z" fill="#de4b3e" />
          <path d="M14 0A14 14 0 0 0 1.900 7l6 10.500L14 14z" fill="#de4b3e" />
          <path d="M1.900 7a14 14 0 0 0 11.600 21l6-10.500L8 17.500z" fill="#25a05a" />
          <path d="M26.100 7H14l5.500 10.500-6 10.500A14 14 0 0 0 26.100 7z" fill="#fcd04b" />
          <circle cx="14" cy="14" r="6.6" fill="#fff" />
          <circle cx="14" cy="14" r="5.2" fill="#4285f4" />
        </Svg>
      </AppSlot>
      <AppSlot>
        <div className="relative">
          <Svg w={31} h={28}>
            <path d="M0 10L15.500 0 31 10v17H0z" fill="#0b5cab" />
            <path d="M3 9.500h25L16 20z" fill="#f4f4f4" />
            <path d="M0 10l15.500 11L31 10v18H0z" fill="#2aa3e8" />
          </Svg>
          <span className="absolute top-[13px] left-[19px] flex size-[22px] items-center justify-center rounded-full border border-[#8fb894] bg-[#17602a] text-[14px] font-semibold">
            10
          </span>
        </div>
      </AppSlot>
      <AppSlot>
        <span className="flex h-8 scale-x-55 items-center font-['Liberation_Sans',sans-serif] text-[42px] leading-none text-[#ff2a00]">Я</span>
      </AppSlot>
      <AppSlot running>
        <Svg w={30} h={30}>
          <circle cx="15" cy="15" r="14.5" fill="#f2f2f2" stroke="#cfcfcf" strokeWidth="0.6" />
          <path d="M8.500 7.500L15 16.500l6.500-9M15 16v10.500" stroke="#d8121a" strokeWidth="3.6" />
        </Svg>
      </AppSlot>
      <AppSlot running>
        <Svg w={28} h={28}>
          <path d="M14 .5A13.300 13.300 0 0 0 2.500 20.500L.6 27.400l7.100-1.800A13.300 13.300 0 1 0 14 .5z" fill="#fff" />
          <path d="M14 2.700A11.100 11.100 0 0 0 4.900 20.100l-1.200 4.200 4.400-1.100A11.100 11.100 0 1 0 14 2.700z" fill="#29c54f" />
          <path d="M9.500 7.500c1-.6 1.700 0 2.800 2.800.2.900-.6 1.400-1 2 1.200 2.300 2.600 3.300 4.700 4.200.7-.4 1.200-1.700 2-1.600 2.800 1.200 3 1.400 2.800 2.200-.5 2.500-3 3-4.500 2.700-4.500-1-7.300-4.300-8.500-7-.8-2 .2-4.600 1.700-5.300z" fill="#fff" />
        </Svg>
      </AppSlot>
      <AppSlot running>
        <Svg w={28} h={26}>
          <path d="M14 3.500h13v19H14z" fill="#fff" stroke="#2b579a" />
          <path d="M17 7h8M17 10h8M17 13h8M17 16h8M17 19h8" stroke="#2b579a" strokeWidth="1.4" />
          <path d="M0 3L16 0v26L0 23z" fill="#2b579a" />
          <path d="M3.500 9l2 8.500L8 9.500l2.500 8 2-8.500" stroke="#fff" strokeWidth="1.8" />
        </Svg>
      </AppSlot>
      <AppSlot running active>
        <Svg w={28} h={27}>
          <defs>
            <linearGradient id="acrobat" x1="0" y1="0" x2="0" y2="1">
              <stop offset="0" stopColor="#f01010" />
              <stop offset="1" stopColor="#7a0606" />
            </linearGradient>
          </defs>
          <rect width="28" height="27" fill="url(#acrobat)" />
          <Trefoil x={5.5} y={4.5} s={1.5} color="#fff" />
        </Svg>
      </AppSlot>

      <div className="ml-auto flex h-full items-center text-[14.5px] tracking-[-0.3px]">
        <Svg w={17} h={10}>
          <path d="M.7 9l7.600-7.700L16 9" stroke="#fff" strokeWidth="1.3" />
        </Svg>
        <Svg w={21} h={14} className="ml-[21px]">
          <path d="M1 0v3M4.500 0v3M0 3h5.500v2.500L3.800 7H1.700L0 5.500zM2.700 7v4h2" stroke="#fff" strokeWidth="1.2" />
          <path d="M7 1.700h11.500V12H5V8" stroke="#fff" strokeWidth="1.2" />
          <path d="M7 3.500h10v7H7zM19 4.500h1.500v5H19z" fill="#fff" />
        </Svg>
        <Svg w={16} h={16} className="ml-[22px]">
          <path d="M1 15A14 14 0 0 1 15 1M5 15A10 10 0 0 1 15 5" stroke="#b9c7ba" strokeWidth="1.3" />
          <path d="M8.500 15A6.500 6.500 0 0 1 15 8.500M11.500 15a3.500 3.500 0 0 1 3.500-3.500" stroke="#fff" strokeWidth="1.3" />
          <circle cx="14" cy="14" r="1.5" fill="#fff" />
        </Svg>
        <Svg w={19} h={14} className="ml-[21px]">
          <path d="M.7 4.500h3L8 .8v12.400L3.700 9.500h-3zM11.500 3.500l6.500 7M18 3.500l-6.500 7" stroke="#fff" strokeWidth="1.2" />
        </Svg>
        <span className="ml-[19px] w-7">ENG</span>
        <div className="ml-[17px] flex w-[70px] flex-col items-center leading-[23px]">
          <span>22:38</span>
          <span>03.05.2020</span>
        </div>
        <Svg w={20} h={20} className="ml-[23px]">
          <path d="M0 0h20v16h-7l-3 3.500L7 16H0z" fill="#fff" />
          <path d="M4 4.500h12M4 8h12M4 11.500h8" stroke="#2b4e31" strokeWidth="1.2" />
        </Svg>
        <div className="mr-[5px] ml-[25px] h-full w-px bg-[#6f8a73]" />
      </div>
    </footer>
  );
}

function ActivationNotice() {
  return (
    <div className="pointer-events-none absolute top-[897px] left-[1421px] w-[450px] text-[16.9px] leading-[25px] text-[#8c8c8c]/60">
      <p className="text-[23.8px] leading-9">Активация Windows</p>
      <p>Чтобы активировать Windows, перейдите в раздел</p>
      <p>"Параметры".</p>
    </div>
  );
}

export default function App() {
  return (
    <div className={`relative flex h-[1080px] w-[1920px] flex-col overflow-hidden whitespace-nowrap ${ui}`}>
      <TitleBar />
      <MenuBar />
      <TabBar />
      <Toolbar />
      <DocumentArea />
      <Taskbar />
      <ActivationNotice />
    </div>
  );
}
